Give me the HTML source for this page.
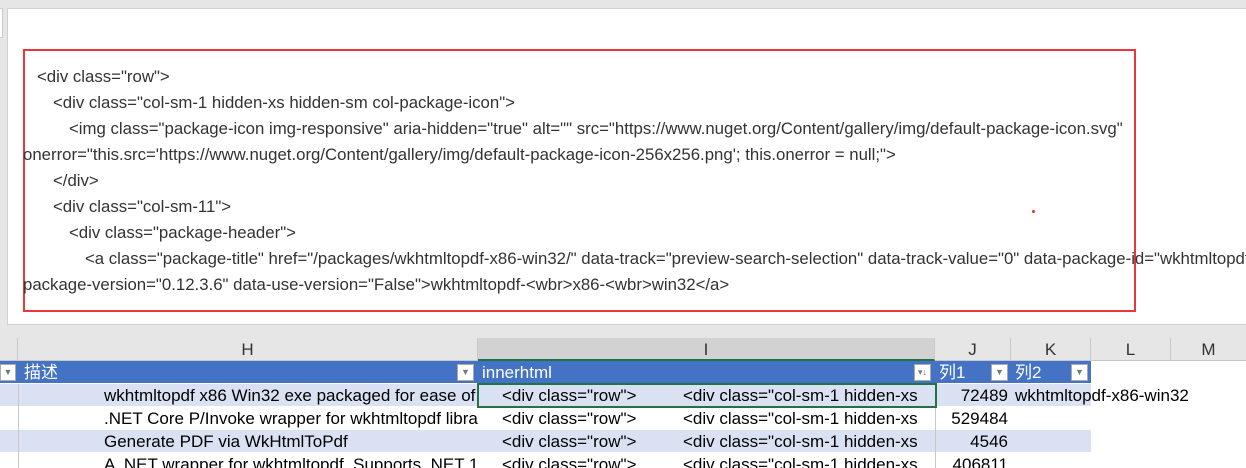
<!DOCTYPE html>
<html><head><meta charset="utf-8"><style>
*{margin:0;padding:0;box-sizing:border-box}
html,body{width:1246px;height:468px;overflow:hidden}
body{background:#e6e6e6;font-family:"Liberation Sans","Noto Sans CJK SC",sans-serif;position:relative}
.panel{position:absolute;left:7px;top:8px;width:1239px;height:317px;background:#fff;border:1px solid #d0d0d0;border-right:none;overflow:hidden}
.tiny{position:absolute;left:0;top:8px;width:3px;height:30px;background:#fff;border:1px solid #ccc;border-left:none}
.red{position:absolute;left:15px;top:40px;width:1113px;height:263px;border:2px solid #e8383b}
.code{position:absolute;font-size:16.8px;color:#333;white-space:nowrap;line-height:18px}
.grid{position:absolute;left:0;top:338px;width:1246px;height:130px;background:#fff;overflow:hidden}
.c{position:absolute;white-space:nowrap;overflow:hidden;font-size:17px;line-height:23px;color:#000}
.colh{position:absolute;top:0;height:23px;background:#e6e6e6;border-right:1px solid #c8c8c8;border-bottom:1px solid #c8c8c8;text-align:center;font-size:17px;line-height:23px;color:#333}
.row{position:absolute;left:0;height:23px;border-bottom:1px solid #fff}
.dd{position:absolute;width:17px;height:17px;background:#fff;border:1px solid #aaa;top:26px;font-size:9px;color:#777;text-align:center;line-height:15px}
</style></head><body>
<div class="tiny"></div>
<div class="panel">
<div class="red"></div>
<div class="code" style="left:29px;top:59px">&lt;div class="row"&gt;</div>
<div class="code" style="left:45px;top:85px">&lt;div class="col-sm-1 hidden-xs hidden-sm col-package-icon"&gt;</div>
<div class="code" style="left:61px;top:111px">&lt;img class="package-icon img-responsive" aria-hidden="true" alt="" src="https://www.nuget.org/Content/gallery/img/default-package-icon.svg"</div>
<div class="code" style="left:15px;top:137px">onerror="this.src='https://www.nuget.org/Content/gallery/img/default-package-icon-256x256.png'; this.onerror = null;"&gt;</div>
<div class="code" style="left:45px;top:163px">&lt;/div&gt;</div>
<div class="code" style="left:45px;top:189px">&lt;div class="col-sm-11"&gt;</div>
<div class="code" style="left:61px;top:215px">&lt;div class="package-header"&gt;</div>
<div class="code" style="left:77px;top:241px">&lt;a class="package-title" href="/packages/wkhtmltopdf-x86-win32/" data-track="preview-search-selection" data-track-value="0" data-package-id="wkhtmltopdf-x86-win32"</div>
<div class="code" style="left:15px;top:267px">package-version="0.12.3.6" data-use-version="False"&gt;wkhtmltopdf-&lt;wbr&gt;x86-&lt;wbr&gt;win32&lt;/a&gt;</div>
<div style="position:absolute;left:1024px;top:201px;width:3px;height:3px;border-radius:50%;background:#d33"></div>
</div>

<div class="grid">
<div class="colh" style="left:0;width:18px"></div>
<div class="colh" style="left:18px;width:460px">H</div>
<div class="colh" style="left:478px;width:457px;background:#d2d2d2;border-bottom:2px solid #217346">I</div>
<div class="colh" style="left:935px;width:76px">J</div>
<div class="colh" style="left:1011px;width:80px">K</div>
<div class="colh" style="left:1091px;width:80px">L</div>
<div class="colh" style="left:1171px;width:75px;border-right:none">M</div>

<div class="row" style="top:23px;width:1091px;background:#4472c4"></div>
<div class="dd" style="left:0;width:16px">▼</div>
<div class="c" style="left:24px;top:23px;color:#fff">描述</div>
<div class="dd" style="left:457px">▼</div>
<div class="c" style="left:482px;top:23px;color:#fff">innerhtml</div>
<div class="dd" style="left:914px">▾↓</div>
<div class="c" style="left:939px;top:23px;color:#fff">列1</div>
<div class="dd" style="left:991px">▼</div>
<div class="c" style="left:1015px;top:23px;color:#fff">列2</div>
<div class="dd" style="left:1071px">▼</div>

<div class="row" style="top:46px;width:1091px;background:#d9e1f2"></div>
<div class="row" style="top:92px;width:1091px;background:#d9e1f2"></div>
<div style="position:absolute;left:18px;top:46px;width:1px;height:90px;background:#c8c8c8"></div>
<div style="position:absolute;left:935px;top:46px;width:1px;height:90px;background:#c8c8c8"></div>

<div class="c" style="left:104px;top:46px;width:374px">wkhtmltopdf x86 Win32 exe packaged for ease of use</div>
<div class="c" style="left:104px;top:69px;width:374px">.NET Core P/Invoke wrapper for wkhtmltopdf library</div>
<div class="c" style="left:104px;top:92px;width:374px">Generate PDF via WkHtmlToPdf</div>
<div class="c" style="left:104px;top:115px;width:374px">A .NET wrapper for wkhtmltopdf. Supports .NET 1</div>

<div class="c" style="left:502px;top:46px">&lt;div class="row"&gt;</div>
<div class="c" style="left:502px;top:69px">&lt;div class="row"&gt;</div>
<div class="c" style="left:502px;top:92px">&lt;div class="row"&gt;</div>
<div class="c" style="left:502px;top:115px">&lt;div class="row"&gt;</div>
<div class="c" style="left:683px;top:46px;width:250px">&lt;div class="col-sm-1 hidden-xs</div>
<div class="c" style="left:683px;top:69px;width:250px">&lt;div class="col-sm-1 hidden-xs</div>
<div class="c" style="left:683px;top:92px;width:250px">&lt;div class="col-sm-1 hidden-xs</div>
<div class="c" style="left:683px;top:115px;width:250px">&lt;div class="col-sm-1 hidden-xs</div>
<div style="position:absolute;left:477px;top:45px;width:460px;height:25px;border:2px solid #217346"></div>

<div class="c" style="left:935px;top:46px;width:73px;text-align:right">72489</div>
<div class="c" style="left:935px;top:69px;width:73px;text-align:right">529484</div>
<div class="c" style="left:935px;top:92px;width:73px;text-align:right">4546</div>
<div class="c" style="left:935px;top:115px;width:73px;text-align:right">406811</div>
<div class="c" style="left:1015px;top:46px;width:231px">wkhtmltopdf-x86-win32</div>
</div>
</body></html>
